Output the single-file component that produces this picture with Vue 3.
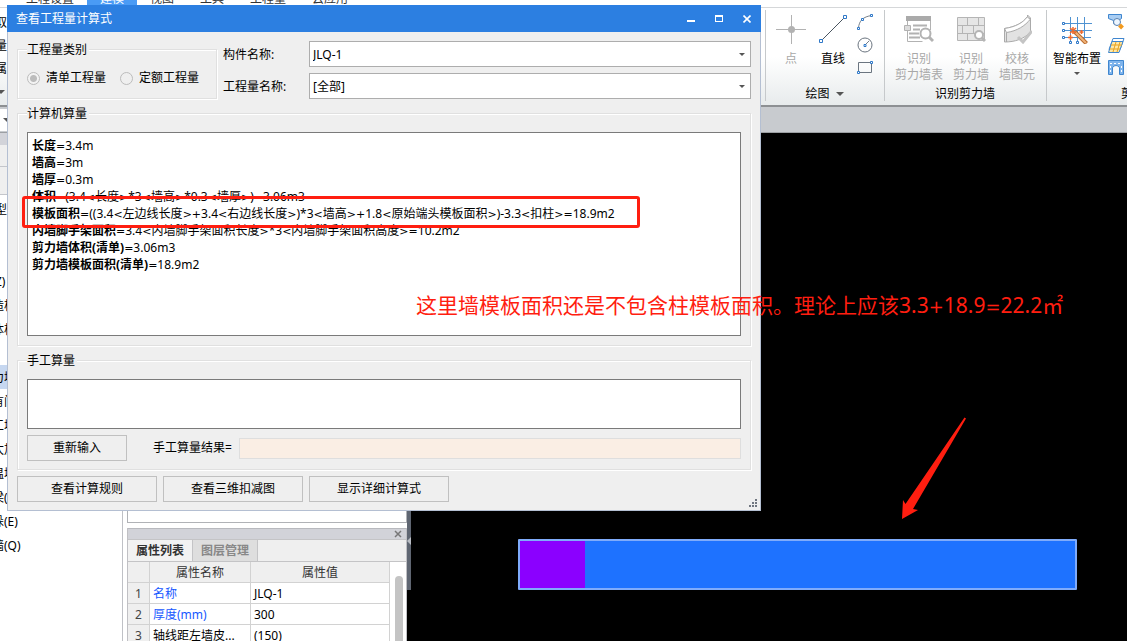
<script setup>
import { ref } from 'vue'

const menuTabs = ['工程设置', '建模', '视图', '工具', '工程量', '云应用']
const activeMenu = ref('建模')

const treeItems = [
  { text: 'Z)' }, { text: '造柱' }, { text: '体柱' }, { text: '' },
  { text: '力墙', selected: true }, { text: '有门' }, { text: '工墙' }, { text: '太加' },
  { text: '温墙' }, { text: '梁(' }, { text: '垛(E)' }, { text: '墙(Q)' },
]

const properties = [
  { name: '名称', value: 'JLQ-1', link: true },
  { name: '厚度(mm)', value: '300', link: true },
  { name: '轴线距左墙皮...', value: '(150)', link: false },
]

const formulas = [
  { name: '长度', expr: '=3.4m' },
  { name: '墙高', expr: '=3m' },
  { name: '墙厚', expr: '=0.3m' },
  { name: '体积', expr: '=(3.4<长度>*3<墙高>*0.3<墙厚>)=3.06m3' },
  { name: '模板面积', expr: '=((3.4<左边线长度>+3.4<右边线长度>)*3<墙高>+1.8<原始端头模板面积>)-3.3<扣柱>=18.9m2' },
  { name: '内墙脚手架面积', expr: '=3.4<内墙脚手架面积长度>*3<内墙脚手架面积高度>=10.2m2' },
  { name: '剪力墙体积(清单)', expr: '=3.06m3' },
  { name: '剪力墙模板面积(清单)', expr: '=18.9m2' },
]

const remark = '这里墙模板面积还是不包含柱模板面积。理论上应该3.3+18.9=22.2㎡'

const tokens = (expr) =>
  expr.split(/([<>=+])/).filter(Boolean).map((t) => ({ t, op: /^[<>=+]$/.test(t) }))

const component = ref('JLQ-1')
const quantity = ref('[全部]')
const kind = ref('list')
const manual = ref('')
</script>

<template>
  <div class="app">
    <nav class="menu">
      <button v-for="m in menuTabs" :key="m" class="menu-tab" :class="{ active: m === activeMenu }" @click="activeMenu = m">{{ m }}</button>
    </nav>

    <header class="ribbon">
      <div class="ribbon-left">
        <span>取</span><span>量</span><span>属</span>
        <i class="caret"></i>
      </div>

      <section class="group">
        <div class="tools draw-tools">
          <button class="tool w28" disabled>
            <svg width="30" height="30" viewBox="0 0 30 30"><path d="M0 15.500H30M15.500 1V30" stroke="#b2b2b2" /><circle cx="15.500" cy="15.500" r="3.500" fill="#b2b2b2" /></svg>
            <span>点</span>
          </button>
          <button class="tool w28">
            <svg width="30" height="30" viewBox="0 0 30 30"><path d="M3 27L27 3" stroke="#4a5560" /><path d="M1.500 25.500h3v3h-3zM25.500 1.500h3v3h-3z" fill="#fff" stroke="#2f78c8" /></svg>
            <span>直线</span>
          </button>
          <div class="small-tools">
            <button aria-label="弧"><svg width="17" height="17" viewBox="0 0 17 17" fill="none"><path d="M1.500 14C2 7 6 2.500 15 1.500" stroke="#777f88" /><path d="M.5 13.500h2v2h-2zM4.500 4.500h2v2h-2zM13.500 .5h2v2h-2z" fill="#fff" stroke="#2f78c8" /></svg></button>
            <button aria-label="圆"><svg width="17" height="17" viewBox="0 0 17 17" fill="none"><circle cx="8" cy="8" r="7" stroke="#6b7580" /><path d="M8 8l4-4" stroke="#777f88" /><path d="M7 7.500h2v2H7z" fill="#fff" stroke="#2f78c8" /></svg></button>
            <button aria-label="矩形"><svg width="17" height="17" viewBox="0 0 17 17" fill="none"><path d="M1.500 2.500h13v10h-13z" stroke="#6b7580" /><path d="M.5 11.500h2v2h-2zM13.500 1.500h2v2h-2z" fill="#fff" stroke="#2f78c8" /></svg></button>
          </div>
        </div>
        <div class="group-label">绘图<i class="caret"></i></div>
      </section>

      <section class="group">
        <div class="tools find-tools">
          <button class="tool w48" disabled>
            <svg width="30" height="30" viewBox="0 0 30 30" fill="none" stroke="#b2b2b2"><path d="M2 2h25v5H2z" fill="#aaa" stroke="none" /><path d="M3.500 7v4M3.500 17v10.500h15M26.500 7v9" /><path d="M.5 11.500h6v5h-6z" fill="#ddd" stroke-width="1" /><path d="M9 11.500h14M9 15.500h7M5 19.500h10M5 23.500h11" stroke-width="2" /><circle cx="21.500" cy="19.500" r="5" fill="#fff" stroke-width="2" /><path d="M25 23l4 4" stroke-width="3" /></svg>
            <span>识别</span><span>剪力墙表</span>
          </button>
          <button class="tool w36" disabled>
            <svg width="30" height="30" viewBox="0 0 30 30" fill="none" stroke="#b5b5b5"><path d="M1.500 3.500h27v23h-27z" fill="#e6e6e6" /><path d="M1 11.500h28M1 19.500h28M11.500 4v7M22.500 4v7M6.500 12v7M17.500 12v7M11.500 20v7" /><circle cx="23" cy="21" r="4" fill="#fff" stroke-width="2" /><path d="M26 24l3 3" stroke-width="3" /></svg>
            <span>识别</span><span>剪力墙</span>
          </button>
          <button class="tool w36" disabled>
            <svg width="30" height="30" viewBox="0 0 30 30" fill="#e2e2e2" stroke="#aaa"><path d="M2.500 14.500C13 13 21 9 25.500 2.500V1l3 3v14C22 25 13 28 2.500 28z" /><path d="M2.500 14.500l2 4C15 17 23 12 28.500 5C26 4 26 4 25.500 2.500C21 9 13 13 2.500 14.500zM4.500 18.500V28" fill="#fff" /><path d="M16 23l5 5 9-11" fill="none" stroke="#c4c4c4" stroke-width="3" /></svg>
            <span>校核</span><span>墙图元</span>
          </button>
        </div>
        <div class="group-label">识别剪力墙</div>
      </section>

      <section class="group last">
        <div class="tools smart-tools">
          <button class="tool w48">
            <svg width="30" height="30" viewBox="0 0 30 30" fill="none"><path d="M8.500 3v24M15.500 3v24M22.500 3v22M2 9.500h28M2 16.500h28M2 23.500h27" stroke="#4f93d2" /><path d="M.5 8.500h2v2h-2zM.5 15.500h2v2h-2zM.5 22.500h2v2h-2zM7.500 27.500h2v2h-2zM14.500 27.500h2v2h-2z" fill="#fff" stroke="#2f78c8" /><path d="M12.500 17.500l12 12" stroke="#b96a2c" stroke-width="4" /><path d="M13 18l11 11" stroke="#f0b37a" stroke-width="2" /><path d="M8 14l6 5M14 14l-6 5M11 13v7M8.500 21v5M6 23.500h5M19.500 16v4M17.500 18h4" stroke="#ef6a2c" stroke-width="1.500" /></svg>
            <span>智能布置</span><i class="caret"></i>
          </button>
          <div class="small-tools">
            <button aria-label="查找图元"><svg width="17" height="17" viewBox="0 0 17 17" fill="none"><path d="M.5 .5h13v4l-3 2v3h-5v-3l-5-2z" fill="#a9cdf2" stroke="#3f86cf" /><circle cx="9" cy="8" r="3.500" fill="#eef6ff" stroke="#567fae" /><path d="M11.500 11l3 3" stroke="#f29a1f" stroke-width="4" /></svg></button>
            <button aria-label="图层面"><svg width="17" height="17" viewBox="0 0 17 17" fill="none"><path d="M5 1.500h11l-4 11H1z" fill="#fff" stroke="#3f86cf" /><path d="M4 4.500h11l-4 11H.5z" fill="#ffe9a8" stroke="#3f86cf" /><path d="M3 8h11M2 12h10M8 5L5 15M12 5L9 15" stroke="#e9a21e" /></svg></button>
            <button aria-label="门洞"><svg width="17" height="17" viewBox="0 0 17 17" fill="none"><path d="M.5 .5h15v14h-4V7.500q-3.500-4-7 0v7h-4z" fill="#7fb4ec" stroke="#3f86cf" /><path d="M2 3.500h12" stroke="#fff" stroke-dasharray="2 2" /><path d="M2.500 6v8M13.500 6v8" stroke="#fff" stroke-dasharray="2 2" /></svg></button>
          </div>
        </div>
        <div class="group-label side-label">剪</div>
      </section>
    </header>

    <div class="strip"><span class="strip-combo"><i class="caret"></i></span></div>

    <div class="body">
      <aside class="tree">
        <div class="tree-title"></div>
        <div class="tree-bar first"></div>
        <div class="tree-bar"></div>
        <div class="tree-head">型</div>
        <ul>
          <li v-for="(it, i) in treeItems" :key="i" :class="{ selected: it.selected, cut: i === 0 }"><span>{{ it.text }}</span></li>
        </ul>
      </aside>

      <section class="side">
        <div class="side-list"></div>
        <div class="panel">
          <div class="panel-title"><button aria-label="关闭面板"><svg width="8" height="8" viewBox="0 0 8 8"><path d="M1 1l6 6M7 1L1 7" stroke="#777" stroke-width="1.500" /></svg></button></div>
          <div class="panel-tabs"><button class="on">属性列表</button><button>图层管理</button></div>
          <div class="panel-body">
            <table>
              <thead><tr><th class="num"></th><th class="name">属性名称</th><th>属性值</th></tr></thead>
              <tbody>
                <tr v-for="(p, i) in properties" :key="p.name">
                  <td class="num">{{ i + 1 }}</td><td :class="{ link: p.link }">{{ p.name }}</td><td>{{ p.value }}</td>
                </tr>
              </tbody>
            </table>
            <div class="scroll"><div class="thumb"></div></div>
          </div>
        </div>
      </section>

      <div class="splitter"><div class="grip"><svg width="4" height="8" viewBox="0 0 4 8"><path d="M4 0v8L0 4z" fill="#b9bdc4" /></svg></div></div>

      <main class="canvas">
        <div class="wall"><div class="column"></div></div>
      </main>
    </div>

    <div class="dialog" role="dialog" aria-labelledby="dlg-title">
      <div class="titlebar">
        <h1 id="dlg-title">查看工程量计算式</h1>
        <button aria-label="最小化"><svg width="8" height="8" viewBox="0 0 8 8"><path d="M0 5h8v2H0z" fill="#fff" /></svg></button>
        <button aria-label="最大化"><svg width="8" height="8" viewBox="0 0 8 8"><path d="M0 0h8v7H0zM1 2v4h6V2z" fill="#fff" fill-rule="evenodd" /></svg></button>
        <button aria-label="关闭"><svg width="8" height="8" viewBox="0 0 8 8"><path d="M.5 .5l7 7M7.500 .5l-7 7" stroke="#fff" stroke-width="1.600" /></svg></button>
      </div>

      <div class="content">
        <div class="top-row">
          <fieldset class="kind">
            <legend>工程量类别</legend>
            <div class="radios">
              <label><input v-model="kind" type="radio" name="kind" value="list" disabled />清单工程量</label>
              <label><input v-model="kind" type="radio" name="kind" value="quota" disabled />定额工程量</label>
            </div>
          </fieldset>
          <div class="combos">
            <label for="component">构件名称:</label>
            <div class="combo"><select id="component" v-model="component"><option>JLQ-1</option></select><i class="caret small"></i></div>
            <label for="quantity">工程量名称:</label>
            <div class="combo"><select id="quantity" v-model="quantity"><option>[全部]</option></select><i class="caret small"></i></div>
          </div>
        </div>

        <fieldset class="calc">
          <legend>计算机算量</legend>
          <div class="output">
            <p v-for="f in formulas" :key="f.name"><b>{{ f.name }}</b><span v-for="(k, i) in tokens(f.expr)" :key="i" :class="{ op: k.op }">{{ k.t }}</span></p>
          </div>
        </fieldset>

        <fieldset class="calc">
          <legend>手工算量</legend>
          <textarea v-model="manual" aria-label="手工算量"></textarea>
          <div class="result-row">
            <button class="btn w100">重新输入</button>
            <label for="result">手工算量结果=</label>
            <input id="result" type="text" readonly />
          </div>
        </fieldset>

        <div class="actions">
          <button class="btn">查看计算规则</button>
          <button class="btn">查看三维扣减图</button>
          <button class="btn">显示详细计算式</button>
        </div>
      </div>
      <svg class="resize" width="8" height="8" viewBox="0 0 8 8" fill="#707680"><path d="M6 0h2v2H6zM3 3h2v2H3zM6 3h2v2H6zM0 6h2v2H0zM3 6h2v2H3zM6 6h2v2H6z" /></svg>
    </div>

    <div class="mark-box"></div>
    <p class="mark-text"><span v-for="(k, i) in tokens(remark)" :key="i" :class="{ op: k.op }">{{ k.t }}</span></p>
    <svg class="mark-arrow" width="68" height="104" viewBox="0 0 68 104" fill="#ff1e10"><path d="M65.500 .5L67 1.500 14 92l5 1L3 102 4 83l2.500 4z" /></svg>
  </div>
</template>

<style>
body {
  margin: 0;
  overflow: hidden;
}
</style>

<style scoped>
* {
  box-sizing: border-box;
}
.app {
  position: relative;
  display: flex;
  flex-direction: column;
  height: 100vh;
  overflow: hidden;
  background: #fff;
  color: #000;
  font-family: "Noto Sans", "Noto Sans CJK SC", sans-serif;
  font-size: 12px;
  line-height: 16px;
}
button,
select,
input,
textarea {
  font: inherit;
  color: inherit;
  margin: 0;
}
button {
  border: 0;
  background: none;
  padding: 0;
}
svg {
  display: block;
}
.caret {
  display: block;
  width: 0;
  border: 4px solid transparent;
  border-top-color: #555;
  border-bottom: 0;
}
.caret.small {
  border-width: 3px 3px 0;
}
.menu {
  display: flex;
  align-items: flex-end;
  height: 7px;
  padding-left: 13px;
  flex: none;
}
.menu-tab {
  padding: 0 13px;
  color: #333;
}
.menu-tab.active {
  background: #4a9bf5;
  color: #fff;
}
.ribbon {
  display: flex;
  flex: none;
  height: 98px;
  border-top: 1px solid #d5d7d9;
  background: linear-gradient(#fff 50%, #e7ebec);
}
.ribbon-left {
  flex: 0 0 765px;
  display: flex;
  flex-direction: column;
  gap: 7px;
  padding-top: 7px;
  align-items: flex-start;
}
.ribbon-left span {
  margin-left: -5px;
}
.ribbon-left .caret {
  margin: 6px 0 0 -3px;
}
.group {
  display: flex;
  flex-direction: column;
  padding-top: 6px;
  position: relative;
}
.group::before {
  content: "";
  position: absolute;
  left: 0;
  top: 2px;
  bottom: 4px;
  width: 1px;
  background: #c6c9cb;
}
.group.last {
  flex: 1;
  min-width: 0;
}
.tools {
  display: flex;
  height: 72px;
}
.draw-tools {
  padding: 0 10px 0 12px;
  gap: 14px;
}
.draw-tools .small-tools {
  margin-left: -4px;
}
.find-tools {
  padding: 0 11px;
  gap: 10px;
}
.smart-tools {
  padding-left: 7px;
  gap: 7px;
}
.tool {
  display: flex;
  flex-direction: column;
  align-items: center;
  white-space: nowrap;
}
.tool svg {
  margin-bottom: 7px;
  flex: none;
}
.tool:disabled {
  color: #a8a8a8;
}
.tool .caret {
  margin-top: 5px;
  border-width: 3px 3px 0;
}
.w28 {
  width: 28px;
}
.w36 {
  width: 36px;
}
.w48 {
  width: 48px;
}
.small-tools {
  display: flex;
  flex-direction: column;
  gap: 6px;
}
.group-label {
  display: flex;
  align-items: center;
  justify-content: center;
  gap: 6px;
}
.group-label.side-label {
  justify-content: flex-start;
  padding-left: 75px;
}
.strip {
  flex: none;
  height: 28px;
  padding-top: 2px;
  border-top: 2px solid #8d9093;
  border-bottom: 1px solid #9c9fa3;
  background: #c8cbcf;
}
.strip-combo {
  display: block;
  width: 9px;
  height: 22px;
  padding: 9px 0 0 3px;
  background: #fff;
}
.body {
  flex: 1;
  display: flex;
  min-height: 0;
}
.tree {
  flex: none;
  width: 123px;
  border-right: 1px solid #bfc1c6;
  overflow: hidden;
}
.tree-title {
  height: 12px;
  background: #d2d3d9;
}
.tree-bar {
  height: 28px;
  background: #efefef;
  border-bottom: 1px solid #c4c6cb;
}
.tree-bar.first {
  height: 22px;
}
.tree-head {
  padding-top: 7px;
  margin-left: -5px;
  height: 74px;
}
.tree ul {
  list-style: none;
  margin: 0;
  padding: 0;
}
.tree li {
  height: 24px;
  padding: 5px 0 3px;
  line-height: 16px;
}
.tree li span {
  margin-left: -8px;
}
.tree li.cut span {
  margin-left: -5px;
}
.tree li.selected {
  background: #c6d7f0;
}
.side {
  flex: none;
  width: 284px;
  padding-left: 4px;
  display: flex;
  flex-direction: column;
}
.side-list {
  height: 390px;
  flex: none;
  border: 1px solid #b0b2b6;
  border-top: 0;
}
.panel {
  margin-top: 5px;
  flex: 1;
  display: flex;
  flex-direction: column;
  min-height: 0;
  border-left: 1px solid #c0c0c4;
  border-right: 1px solid #c0c0c4;
}
.panel-title {
  flex: none;
  display: flex;
  justify-content: flex-end;
  align-items: center;
  height: 11px;
  padding-right: 4px;
  background: #d2d3d9;
  border-top: 1px solid #b8b9be;
}
.panel-tabs {
  flex: none;
  display: flex;
  height: 23px;
  background: #efefef;
  border-top: 1px solid #c4c4c6;
  border-bottom: 1px solid #c4c4c6;
}
.panel-tabs button {
  width: 65px;
  border-right: 1px solid #c4c4c6;
  background: #dedede;
  color: #888;
  font-weight: 700;
}
.panel-tabs .on {
  background: #f2f2f2;
  color: #333;
}
.panel-body {
  display: flex;
  min-height: 0;
  overflow: hidden;
}
table {
  flex: 1;
  border-collapse: separate;
  border-spacing: 0;
  table-layout: fixed;
}
th,
td {
  height: 21px;
  padding: 2px 3px 0;
  border-right: 1px solid #d2d2d2;
  border-bottom: 1px solid #d2d2d2;
  font-weight: 400;
  text-align: left;
  white-space: nowrap;
}
th {
  background: #efefef;
  text-align: center;
  color: #333;
}
.num {
  width: 22px;
  background: #efefef;
  text-align: center;
  color: #444;
}
.name {
  width: 101px;
}
.link {
  color: #1657ff;
}
.scroll {
  flex: none;
  width: 16px;
  padding: 14px 3px 0 5px;
}
.thumb {
  height: 100px;
  border-radius: 4px;
  background: #c4c4c4;
}
.splitter {
  flex: none;
  width: 4px;
  background: #000;
}
.grip {
  height: 457px;
  padding-top: 404px;
  background: #5f6672;
}
.canvas {
  flex: 1;
  position: relative;
  background: #000;
  overflow: hidden;
}
.wall {
  position: absolute;
  left: 107px;
  top: 406px;
  width: 559px;
  height: 51px;
  border: 2px solid #7fabfb;
  border-radius: 1px;
  background: #1e72ff;
}
.column {
  width: 65px;
  height: 100%;
  background: #8b00ff;
}
.dialog {
  position: absolute;
  left: 7px;
  top: 5px;
  width: 754px;
  background: #efefef;
  border: 1px solid #b4bfd2;
  border-top: 0;
}
.titlebar {
  display: flex;
  align-items: center;
  gap: 20px;
  height: 27px;
  margin: 0 -1px;
  padding: 0 10px 0 9px;
  background: #2c7fe1;
  color: #fff;
}
.titlebar h1 {
  flex: 1;
  margin: 0;
  font-size: 12px;
  font-weight: 400;
}
.content {
  display: flex;
  flex-direction: column;
  gap: 6px;
  padding: 9px 9px 8px;
}
.top-row {
  display: flex;
  gap: 6px;
}
fieldset {
  min-width: 0;
  margin: 0;
  padding: 0 9px;
  border: 1px solid #e0e0e0;
  box-shadow: 1px 1px #fff, inset 1px 1px #fff;
}
legend {
  height: 16px;
  margin: 0;
  padding: 1px 2px 0 0;
  background: #efefef;
}
.kind {
  width: 200px;
}
.radios {
  display: flex;
  justify-content: space-between;
  padding: 13px 8px 0 0;
}
.radios label {
  display: flex;
  align-items: center;
  gap: 6px;
}
.radios input {
  appearance: none;
  width: 13px;
  height: 13px;
  border: 1px solid #bcbcbc;
  border-radius: 50%;
}
.radios input:checked {
  background: radial-gradient(circle, #bcbcbc 3px, #f3f3f3 4px);
}
.combos {
  flex: 1;
  display: grid;
  grid-template-columns: 80px 1fr;
  gap: 6px;
  align-items: center;
}
.combos label {
  padding-top: 2px;
}
.combo {
  display: flex;
  align-items: center;
  height: 26px;
  padding-right: 5px;
  border: 1px solid #adadad;
  background: #fff;
}
.combo select {
  flex: 1;
  appearance: none;
  border: 0;
  padding: 2px 3px 0;
  background: none;
}
.output,
textarea {
  display: block;
  width: 100%;
  border: 1px solid #7a7a7a;
  background: #fff;
}
.output {
  height: 204px;
  margin: 11px 0 9px;
  padding: 4px;
  line-height: 17px;
}
.output p {
  margin: 0;
  white-space: nowrap;
}
.op {
  font-family: "DejaVu Sans", sans-serif;
  font-size: 11px;
  line-height: 1;
}
textarea {
  height: 50px;
  margin-top: 11px;
  resize: none;
}
.result-row {
  display: flex;
  align-items: center;
  margin: 6px 0 8px;
}
.result-row label {
  width: 86px;
  margin-left: 26px;
  white-space: nowrap;
}
.result-row input {
  flex: 1;
  height: 21px;
  border: 1px solid #dedede;
  background: #faeee4;
}
.btn {
  width: 140px;
  height: 26px;
  border: 1px solid #c0c0c0;
}
.w100 {
  width: 100px;
}
.actions {
  display: flex;
  gap: 6px;
}
.resize {
  position: absolute;
  right: 3px;
  bottom: 3px;
}
.mark-box {
  position: absolute;
  left: 22px;
  top: 196px;
  width: 618px;
  height: 32px;
  border: 3px solid #ff1e10;
  border-radius: 3px;
}
.mark-text {
  position: absolute;
  left: 416px;
  top: 291px;
  margin: 0;
  color: #ff1e10;
  font-size: 21px;
  line-height: 28px;
  white-space: nowrap;
}
.mark-text .op {
  font-size: 18px;
}
.mark-arrow {
  position: absolute;
  left: 899px;
  top: 417px;
}
</style>
